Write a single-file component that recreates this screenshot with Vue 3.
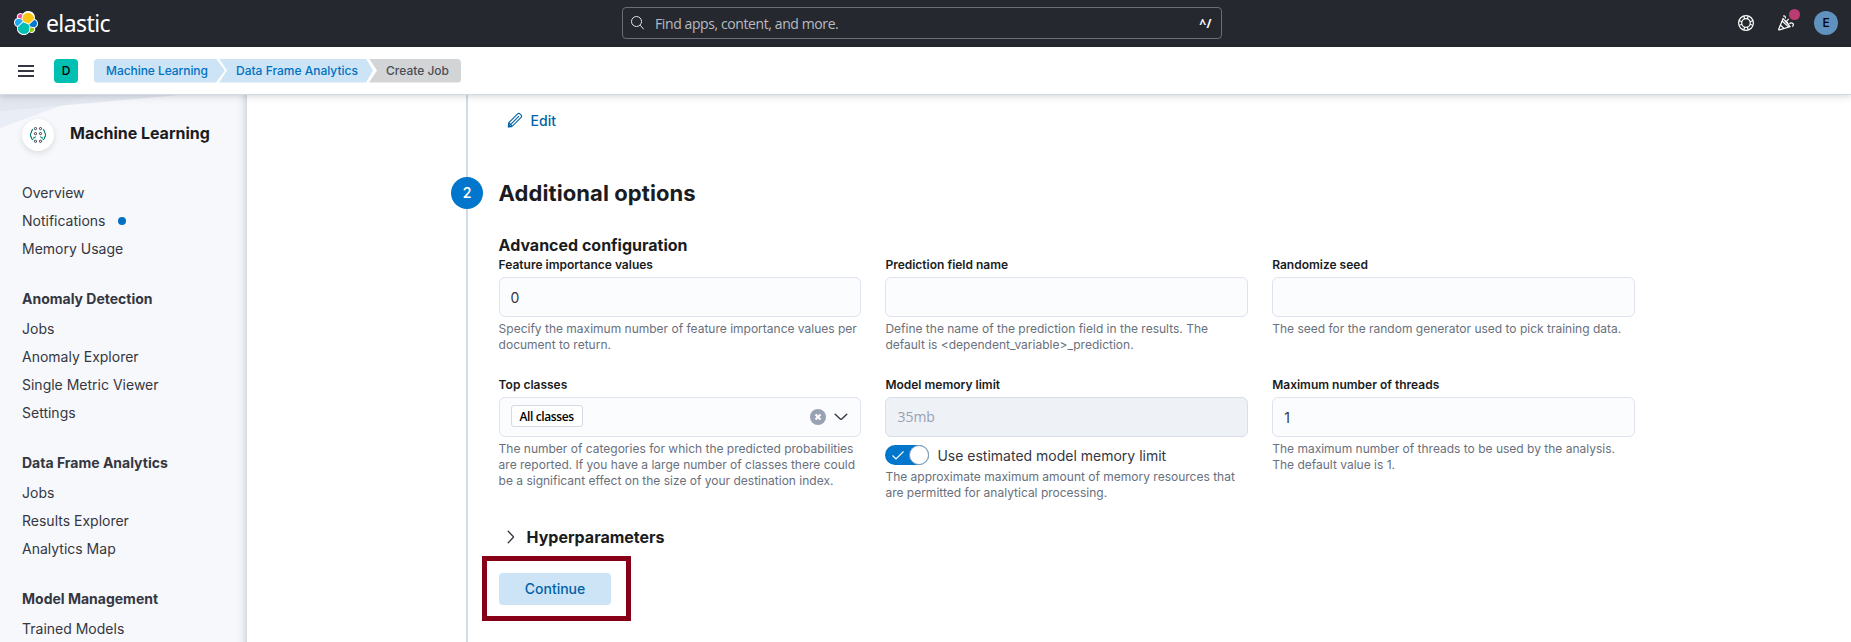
<script setup>
const nav = [
  { items: ['Overview', 'Notifications', 'Memory Usage'] },
  { title: 'Anomaly Detection', items: ['Jobs', 'Anomaly Explorer', 'Single Metric Viewer', 'Settings'] },
  { title: 'Data Frame Analytics', items: ['Jobs', 'Results Explorer', 'Analytics Map'] },
  { title: 'Model Management', items: ['Trained Models'] },
]
</script>

<template>
  <div class="page">
    <header class="top">
      <div class="brand">
        <svg class="logo" width="24" height="24" viewBox="0 0 32 32">
          <path fill="#fff" d="M32 16.77a6.334 6.334 0 0 0-1.14-3.63 6.269 6.269 0 0 0-3.01-2.32 9.05 9.05 0 0 0 .16-1.71A9.113 9.113 0 0 0 11.53 3.77a4.77 4.77 0 0 0-2.93-1 4.84 4.84 0 0 0-4.55 6.46 6.382 6.382 0 0 0-3 2.36A6.306 6.306 0 0 0 0 15.22c0 2.67 1.66 5.06 4.17 6a9.05 9.05 0 0 0-.17 1.73 9.096 9.096 0 0 0 16.47 5.32 4.764 4.764 0 0 0 2.93 1.02 4.836 4.836 0 0 0 4.55-6.47A6.391 6.391 0 0 0 32 16.77" />
          <path fill="#FEC514" d="m12.58 13.79 7 3.2 7.07-6.19A7.886 7.886 0 0 0 12.24 5.9l-1.18 6.08z" />
          <path fill="#00BFB3" d="M5.33 21.21A8.028 8.028 0 0 0 5.2 22.75a7.922 7.922 0 0 0 14.46 4.46l1.17-6.07-1.56-2.98-7.03-3.2z" />
          <path fill="#F04E98" d="m5.29 9.08 4.8 1.13 1.05-5.45a3.813 3.813 0 0 0-2.3-.79 3.8 3.8 0 0 0-3.55 5.11" />
          <path fill="#1BA9F5" d="M4.87 10.22a5.33 5.33 0 0 0-3.63 5 5.323 5.323 0 0 0 3.43 4.96l6.73-6.09-1.23-2.64z" />
          <path fill="#93C90E" d="M20.87 27.21a3.82 3.82 0 0 0 2.3.78 3.8 3.8 0 0 0 3.55-5.1l-4.8-1.12z" />
          <path fill="#07C" d="m21.85 20.56 5.28 1.23a5.34 5.34 0 0 0 3.64-5.01 5.316 5.316 0 0 0-3.43-4.95l-6.91 6.06z" />
        </svg>
        <span class="wordmark">elastic</span>
      </div>
      <div class="search">
        <svg width="16" height="16" viewBox="0 0 16 16" fill="none" stroke="#dfe5ef"><circle cx="6.5" cy="6.5" r="5" /><path d="m10.2 10.2 3.5 4" /></svg>
        <span class="ph">Find apps, content, and more.</span>
        <span class="key">^/</span>
      </div>
      <div class="actions">
        <svg width="16" height="16" viewBox="0 0 16 16" fill="none" stroke="#fff" stroke-width="1.2"><circle cx="8" cy="8" r="7.4" /><circle cx="8" cy="8" r="4.3" /><path d="M5.8 1.2 6.7 4M10.2 1.2 9.3 4M5.8 14.8l.9-2.8M10.2 14.8 9.3 12M1.2 5.8 4 6.7M1.2 10.2 4 9.3M14.8 5.8 12 6.7M14.8 10.2 12 9.3" /></svg>
        <div class="news">
          <svg width="16" height="16" viewBox="0 0 16 16" fill="none" stroke="#fff" stroke-width="1.2"><path d="M5 3.7.7 14.3c-.1.4.2.7.6.6L12 11.7zM4.2 6l6.2 5.9M2.6 10.2l3.6 3.4M5.4 4.2c1.8 1 5 4.3 6.4 7.2M5.2 1.2c1.4-.8 2.7.6 2 2.2M8.3 6.3l2.5-2.5M11.5 8.8c1.3-1.6 4.3-.8 3.8 1.4-.1.8-.6 1.1-1.2 1.2" /></svg>
          <i class="dot"></i>
        </div>
        <span class="user">E</span>
      </div>
    </header>

    <div class="bar">
      <svg class="menu" width="16" height="12" viewBox="0 0 16 12"><path fill="#343741" d="M0 0h16v2H0zM0 5h16v2H0zM0 10h16v2H0z" /></svg>
      <span class="space">D</span>
      <nav class="crumbs">
        <span class="crumb c1">Machine Learning</span>
        <span class="crumb c2">Data Frame Analytics</span>
        <span class="crumb c3">Create Job</span>
      </nav>
    </div>

    <div class="body">
      <aside>
        <svg class="deco" width="246" height="40" viewBox="0 0 246 40"><path d="M0 0h90L0 33z" fill="#e9edf5" /><path d="M0 0h180L0 16z" fill="#dfe4ee" fill-opacity=".8" /></svg>
        <div class="solution">
          <span class="badge">
            <svg width="16" height="16" viewBox="0 0 16 16" fill="none"><g stroke="#343741"><circle cx="5.5" cy="1.6" r="1.1" /><circle cx="10.5" cy="1.6" r="1.1" /><circle cx="5.5" cy="6.6" r="1.1" /><circle cx="10.5" cy="6.6" r="1.1" /><circle cx="5.5" cy="14.3" r="1.1" /><circle cx="10.5" cy="14.3" r="1.1" /></g><path stroke="#017d73" stroke-width="1.2" d="M3 2.4C1.500 3.100 1.800 4.500 1.300 5.500.2 7 .3 9 1.300 10.200c.1 1.500.9 2.500 2 2.700M13 2.400c1.500.7 1.200 2.100 1.700 3.100 1.100 1.500 1 3.500 0 4.700-.1 1.500-.9 2.500-2 2.700M5.500 9.500c-.2 1-1 1.500-2.500 1.700M10.500 9.500c.2 1 1 1.500 2.500 1.700" /></svg>
          </span>
          <b>Machine Learning</b>
        </div>
        <div v-for="(g, i) in nav" :key="i" class="group">
          <div v-if="g.title" class="gtitle">{{ g.title }}</div>
          <div v-for="t in g.items" :key="t" class="item"><span>{{ t }}</span><i v-if="t === 'Notifications'"></i></div>
        </div>
      </aside>

      <main>
        <div class="rail"><span class="num">2</span></div>
        <div class="content">
          <div class="edit">
            <svg width="16" height="16" viewBox="0 0 16 16" fill="none" stroke="#0061a6" stroke-width="1.1"><path d="m1.7 10.8 8.900-8.900c.7-.7 1.600-.7 2.300 0l1.200 1.200c.7.7.7 1.600 0 2.300l-8.900 8.900-3.800.6zM4 12.200l8-8M2 11l3 3" /><path d="M1.500 12.500v2.300h2.300z" fill="#0061a6" /></svg>
            <span>Edit</span>
          </div>
          <h2>Additional options</h2>
          <h3>Advanced configuration</h3>
          <div class="grid">
            <div class="field">
              <label>Feature importance values</label>
              <div class="input">0</div>
              <p>Specify the maximum number of feature importance values per<br>document to return.</p>
            </div>
            <div class="field">
              <label>Prediction field name</label>
              <div class="input"></div>
              <p>Define the name of the prediction field in the results. The<br>default is &lt;dependent_variable&gt;_prediction.</p>
            </div>
            <div class="field">
              <label>Randomize seed</label>
              <div class="input"></div>
              <p>The seed for the random generator used to pick training data.</p>
            </div>
            <div class="field">
              <label>Top classes</label>
              <div class="input combo">
                <span class="pill">All classes</span>
                <svg class="clear" width="16" height="16" viewBox="0 0 16 16"><circle cx="8" cy="8" r="8" fill="#98a2b3" /><path d="m5.500 5.500 5 5m0-5-5 5" stroke="#fff" stroke-width="2" /></svg>
                <svg width="16" height="16" viewBox="0 0 16 16" fill="none" stroke="#343741" stroke-width="1.4" stroke-linecap="round"><path d="m2.200 5.300 5.300 4.900q.5.400 1 0l5.300-4.900" /></svg>
              </div>
              <p>The number of categories for which the predicted probabilities<br>are reported. If you have a large number of classes there could<br>be a significant effect on the size of your destination index.</p>
            </div>
            <div class="field">
              <label>Model memory limit</label>
              <div class="input disabled">35mb</div>
              <div class="switch">
                <svg width="44" height="20" viewBox="0 0 44 20" fill="none"><rect width="44" height="20" rx="10" fill="#07c" /><path d="m7.500 10.500 3.500 3.500 7.500-7.500" stroke="#fff" stroke-width="1.2" /><circle cx="34" cy="10" r="9.5" fill="#fff" stroke="#8a9bb0" /></svg>
                <span>Use estimated model memory limit</span>
              </div>
              <p class="tight">The approximate maximum amount of memory resources that<br>are permitted for analytical processing.</p>
            </div>
            <div class="field">
              <label>Maximum number of threads</label>
              <div class="input">1</div>
              <p>The maximum number of threads to be used by the analysis.<br>The default value is 1.</p>
            </div>
          </div>
          <div class="hyper">
            <svg width="16" height="16" viewBox="0 0 16 16" fill="none" stroke="#343741" stroke-width="1.3" stroke-linecap="round"><path d="m5.200 2.200 5 5.300q.4.500 0 1l-5 5.300" /></svg>
            <span>Hyperparameters</span>
          </div>
          <div class="frame"><button>Continue</button></div>
        </div>
      </main>
    </div>
  </div>
</template>

<style>
body { margin: 0; overflow: hidden; }
</style>
<style scoped>
* { box-sizing: border-box; }
.page { width: 1851px; height: 642px; overflow: hidden; display: flex; flex-direction: column; background: #fff; font-family: Inter, "Liberation Sans", sans-serif; font-size: 14px; color: #343741; }
.top { height: 47px; flex: none; background: #25282f; display: flex; align-items: center; justify-content: space-between; padding: 0 13px 1px 14px; }
.brand { width: 392px; display: flex; align-items: center; gap: 8px; }
.wordmark { color: #fff; font: 400 23px/30px "Noto Sans", sans-serif; letter-spacing: -.6px; }
.search { width: 600px; height: 32px; border: 1px solid #6a6d74; border-radius: 4px; display: flex; align-items: center; padding: 0 8px 0 7px; }
.search .ph { flex: 1; margin-left: 9px; padding-top: 1px; color: #b8bbc1; font-family: "Open Sans", sans-serif; letter-spacing: -.4px; }
.search .key { color: #fff; font: 700 12px "Open Sans", sans-serif; padding-top: 1px; letter-spacing: .5px; margin-right: 1px; }
.actions { width: 400px; display: flex; justify-content: flex-end; align-items: center; gap: 24px; }
.news { position: relative; width: 16px; height: 16px; }
.news .dot { position: absolute; left: 11px; top: -6px; width: 11px; height: 11px; border-radius: 50%; background: #bc3b72; }
.actions svg { display: block; }
.user { width: 24px; height: 24px; border-radius: 50%; background: #6092c0; color: #000; font-size: 12px; line-height: 24px; text-align: center; font-weight: 500; margin-left: -4px; }
.bar { height: 48px; flex: none; background: #fff; border-bottom: 1px solid #d3dae6; display: flex; align-items: center; padding-left: 18px; position: relative; z-index: 2; box-shadow: 0 1px 5px rgba(0,0,0,.1), 0 4px 8px rgba(0,0,0,.05); }
.space { width: 24px; height: 24px; margin-left: 20px; border-radius: 4px; background: #00bfb3; color: #000; font-size: 12px; font-weight: 500; text-align: center; line-height: 24px; }
.crumbs { margin-left: 16px; display: flex; height: 24px; font-size: 12px; font-weight: 500; line-height: 24px; color: #0071c2; }
.crumb { background: #cce4f5; white-space: nowrap; }
.c1 { width: 131px; padding-left: 12px; border-radius: 4px 0 0 4px; clip-path: polygon(0 0, 122px 0, 131px 50%, 122px 100%, 0 100%); letter-spacing: -.06px; }
.c2 { width: 154px; margin-left: -6px; padding-left: 17px; clip-path: polygon(0 0, 147px 0, 154px 50%, 147px 100%, 0 100%, 8px 50%); }
.c3 { width: 92px; margin-left: -4px; padding-left: 17px; background: #d3d4d6; color: #4a4d56; border-radius: 0 4px 4px 0; clip-path: polygon(0 0, 100% 0, 100% 100%, 0 100%, 8px 50%); }
.body { flex: 1; display: flex; min-height: 0; }
aside { width: 247px; flex: none; background: linear-gradient(90deg, transparent 237px, #edf0f5 242px, #d5dae1 247px), #f7f8fc; position: relative; padding: 24px 0 0 22px; }
.deco { position: absolute; left: 0; top: 0; }
.solution { display: flex; align-items: center; height: 32px; gap: 16px; position: relative; margin-bottom: 28px; }
.badge { width: 32px; height: 32px; border-radius: 50%; background: #fff; box-shadow: 0 2px 6px rgba(0,0,0,.12); display: flex; align-items: center; justify-content: center; }
.solution b { font-size: 16px; line-height: 20px; margin-top: -5px; font-weight: 700; letter-spacing: -.03px; color: #1a1c21; }
.group + .group { margin-top: 24px; }
.gtitle { height: 24px; line-height: 24px; margin-bottom: 4px; font-weight: 700; }
.item { height: 28px; line-height: 28px; display: flex; align-items: center; }
.item i { width: 8px; height: 8px; border-radius: 50%; background: #0071c2; margin-left: 12px; }
main { flex: 1; display: flex; padding-left: 204px; }
.rail { width: 32px; background: linear-gradient(#d3dae6, #d3dae6) 15px 0 / 2px 100% no-repeat; padding-top: 82px; flex: none; }
.num { display: block; height: 32px; border-radius: 50%; background: #07c; color: #fff; text-align: center; line-height: 32px; font-weight: 600; }
.content { padding-left: 15.6px; width: 1152px; flex: none; }
.edit { display: flex; align-items: center; gap: 8px; height: 24px; margin: 13px 0 0 8px; color: #0061a6; font-weight: 500; }
h2 { margin: 45px 0 0; font-size: 22px; line-height: 32px; font-weight: 700; color: #1a1c21; letter-spacing: .08px; }
h3 { margin: 24px 0 0; font-size: 16px; line-height: 24px; font-weight: 700; color: #1a1c21; }
.grid { display: grid; grid-template-columns: repeat(3, 1fr); column-gap: 24px; grid-template-rows: 120px 120px; }
label { display: block; font-size: 12px; line-height: 16px; font-weight: 600; color: #1a1c21; margin-bottom: 4px; white-space: nowrap; }
.input { height: 40px; border: 1px solid #e0e3ef; border-radius: 6px; background: #fbfcfd; padding: 0 11px; display: flex; align-items: center; }
.disabled { background: #eef1f6; border-color: #d9dfea; color: #98a2b3; font-family: "Open Sans", sans-serif; padding-bottom: 1px; }
.combo { gap: 7px; }
.pill { height: 22px; margin-top: -2px; border: 1px solid #d3dae6; border-radius: 3px; background: #fff; font-size: 12px; font-weight: 600; font-family: "Open Sans", sans-serif; line-height: 21px; width: 72px; text-align: center; letter-spacing: -.4px; color: #000; white-space: nowrap; }
.clear { margin-left: auto; }
p { margin: 4px 0 0; font-size: 12px; line-height: 16px; color: #69707d; white-space: nowrap; }
.switch { display: flex; align-items: center; gap: 8px; margin-top: 8px; height: 20px; }
p.tight { margin-top: 4px; }
.hyper { display: flex; align-items: center; gap: 8px; height: 24px; margin: 28px 0 0 4px; font-size: 16px; font-weight: 700; color: #1a1c21; }
.frame { margin: 7px 0 0 -16.6px; width: 149px; height: 65px; border: 5px solid #870018; padding: 12px; }
button { display: block; width: 112px; height: 32px; border: 0; border-radius: 4px; background: #cce4f5; color: #0061a6; font: 500 14px/32px Inter, sans-serif; padding: 0; }
</style>
